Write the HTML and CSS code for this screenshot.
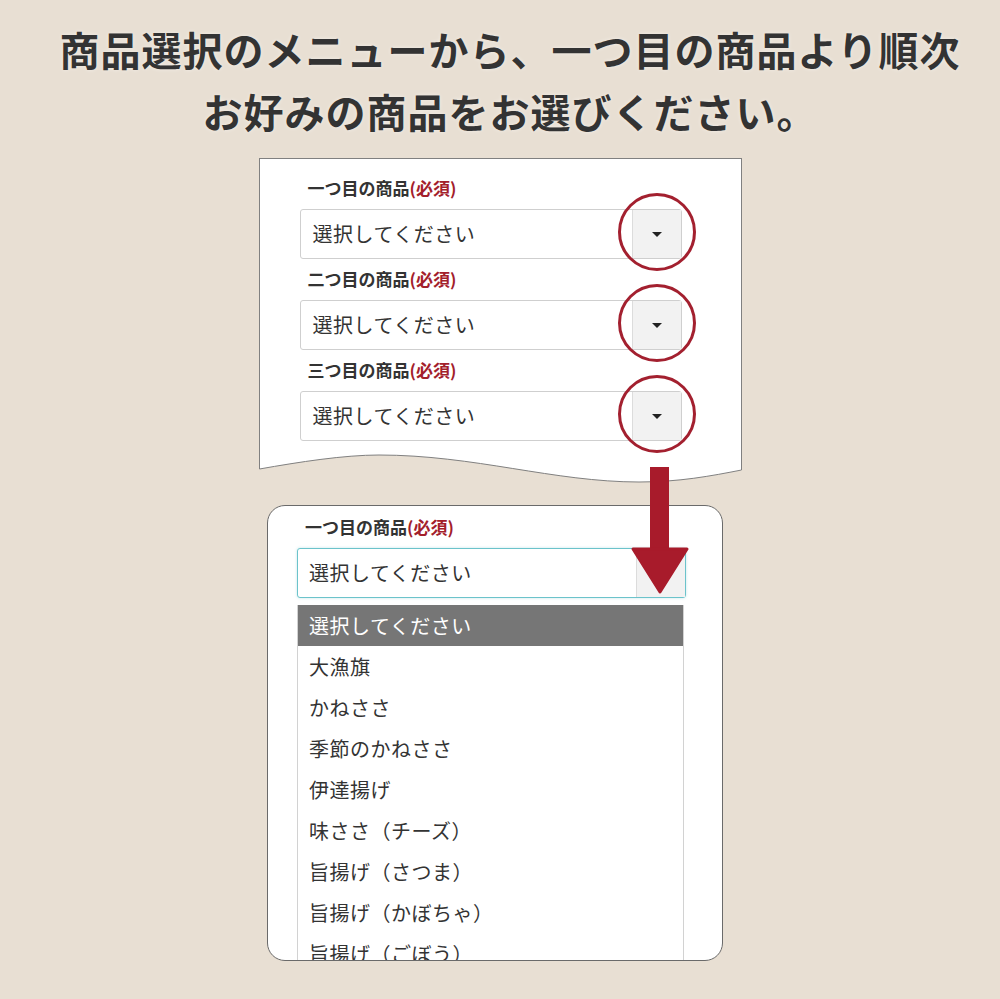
FILE: index.html
```html
<!DOCTYPE html>
<html lang="ja">
  <head>
    <meta charset="UTF-8" />
    <meta name="viewport" content="width=device-width, initial-scale=1.0"/>
    <title>商品の選び方</title>
    <link rel="stylesheet" href="styles.css">
  </head>
  <body>
    <div class="page">
      <h1 class="title">商品選択のメニューから、一つ目の商品より順次<br>お好みの商品をお選びください。</h1>

      <div class="sheet">
        <div class="sheet-body">
          <div class="field">
            <div class="field-label">一つ目の商品<span class="req">(必須)</span></div>
            <div class="select">
              <span class="select-text">選択してください</span>
              <span class="select-btn"><i class="caret"></i><span class="ring"></span></span>
            </div>
          </div>
          <div class="field">
            <div class="field-label">二つ目の商品<span class="req">(必須)</span></div>
            <div class="select">
              <span class="select-text">選択してください</span>
              <span class="select-btn"><i class="caret"></i><span class="ring"></span></span>
            </div>
          </div>
          <div class="field">
            <div class="field-label">三つ目の商品<span class="req">(必須)</span></div>
            <div class="select">
              <span class="select-text">選択してください</span>
              <span class="select-btn"><i class="caret"></i><span class="ring"></span></span>
            </div>
          </div>
        </div>
        <svg class="sheet-edge" width="483" height="35" viewBox="0 0 483 35">
          <path d="M0,0 L0,20 C40,13 85,6 120,6 C215,6 295,33 380,33 C420,33 452,27 483,21 L483,0 Z" fill="#fff"/>
          <path d="M0.5,0 L0.5,20 C40,13 85,6 120,6 C215,6 295,33 380,33 C420,33 452,27 482.5,21 L482.5,0" fill="none" stroke="#808080" stroke-width="1"/>
        </svg>
      </div>

      <div class="zoom-card">
        <div class="field-label">一つ目の商品<span class="req">(必須)</span></div>
        <div class="select is-open">
          <span class="select-text">選択してください</span>
          <span class="select-btn"></span>
        </div>
        <ul class="options">
          <li class="active">選択してください</li>
          <li>大漁旗</li>
          <li>かねささ</li>
          <li>季節のかねささ</li>
          <li>伊達揚げ</li>
          <li>味ささ（チーズ）</li>
          <li>旨揚げ（さつま）</li>
          <li>旨揚げ（かぼちゃ）</li>
          <li>旨揚げ（ごぼう）</li>
        </ul>
      </div>

      <svg class="arrow" width="60" height="130" viewBox="0 0 60 130">
        <rect x="20" y="2" width="19" height="84" fill="#a81b2b"/>
        <polygon points="3,84 57,84 30,127" fill="#a81b2b" stroke="#a81b2b" stroke-width="3" stroke-linejoin="round"/>
      </svg>
    </div>
  </body>
</html>
```

FILE: styles.css
```css
body {
  margin: 0;
  background: #e8dfd3;
  font-family: "Noto Sans CJK JP", "Noto Sans", sans-serif;
  color: #333;
}

.page {
  position: relative;
  width: 1000px;
  height: 999px;
  overflow: hidden;
}

.title {
  margin: 0;
  padding: 18px 0 0 20px;
  font-size: 40px;
  line-height: 62px;
  font-weight: 700;
  letter-spacing: 1px;
  text-align: center;
  color: #333;
  text-shadow: 0 0 4px rgba(255, 255, 255, 0.5);
}

/* top sheet with torn bottom */
.sheet {
  width: 483px;
  margin: 16px auto 0;
}

.sheet-body {
  background: #fff;
  border: 1px solid #808080;
  border-bottom: none;
  padding: 19px 59px 8px 40px;
}

.sheet-edge {
  display: block;
}

.field + .field {
  margin-top: 10px;
}

.field-label {
  padding-left: 8px;
  margin-bottom: 11px;
  font-size: 17px;
  line-height: 20px;
  font-weight: 700;
  color: #333;
}

.req {
  color: #a3202b;
}

.select {
  display: flex;
  height: 50px;
  box-sizing: border-box;
  border: 1px solid #cfcfcf;
  border-radius: 3px;
  background: #fff;
}

.select-text {
  flex: 1;
  padding-left: 12px;
  font-size: 20px;
  line-height: 48px;
  letter-spacing: 0.5px;
  color: #333;
}

.select-btn {
  position: relative;
  width: 48px;
  display: flex;
  align-items: center;
  justify-content: center;
  background: #f2f2f2;
  border-left: 1px solid #dcdcdc;
}

.caret {
  width: 0;
  height: 0;
  border-left: 5px solid transparent;
  border-right: 5px solid transparent;
  border-top: 5px solid #222;
}

.ring {
  position: absolute;
  left: -15px;
  top: -17px;
  width: 72px;
  height: 72px;
  border: 3px solid #a3202f;
  border-radius: 50%;
}

/* zoomed dropdown */
.zoom-card {
  width: 456px;
  height: 456px;
  box-sizing: border-box;
  margin: 21px 0 0 267px;
  padding: 11px 36px 0 29px;
  background: #fff;
  border: 1px solid #6a6a6a;
  border-radius: 18px;
  overflow: hidden;
}

.select.is-open {
  border-color: #6cc3cb;
  box-shadow: 0 0 3px rgba(108, 195, 203, 0.4);
}

.select.is-open .select-text {
  padding-left: 11px;
}

.options {
  list-style: none;
  margin: 7px 2px 0 0;
  padding: 0;
  border-left: 1px solid #d2d2d2;
  border-right: 1px solid #d2d2d2;
}

.options li {
  height: 41px;
  padding-left: 11px;
  font-size: 20px;
  line-height: 41px;
  letter-spacing: 0.5px;
  color: #333;
}

.options li.active {
  background: #767676;
  color: #fff;
}

.arrow {
  position: absolute;
  left: 630px;
  top: 465px;
}
```
